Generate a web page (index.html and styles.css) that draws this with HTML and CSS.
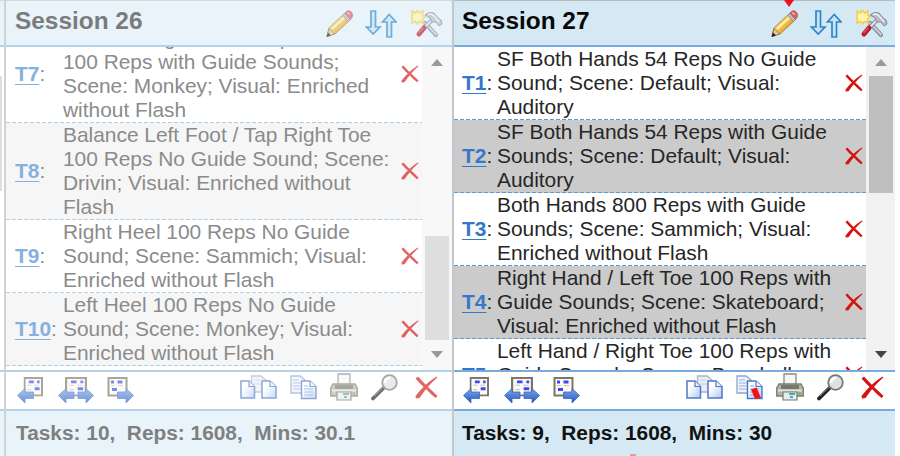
FILE: index.html
```
<!DOCTYPE html>
<html lang="en">
<head>
    <meta charset="UTF-8">
    <title>Sessions</title>
    <link rel="stylesheet" href="styles.css">
</head>
<body>
    <!-- Icons -->
    <svg class="defs">
        <defs>
            <linearGradient id="gBlue" x1="0" y1="0" x2="0" y2="1">
                <stop offset="0" stop-color="#7fa8ee"/><stop offset="1" stop-color="#2558b8"/>
            </linearGradient>
            <linearGradient id="gPage" x1="0" y1="0" x2="1" y2="1">
                <stop offset="0.3" stop-color="#ffffff"/><stop offset="1" stop-color="#b0c8f4"/>
            </linearGradient>
            <linearGradient id="gPencil" x1="0" y1="0" x2="1" y2="1">
                <stop offset="0.3" stop-color="#ffe680"/><stop offset="0.7" stop-color="#e09a20"/>
            </linearGradient>
        </defs>
        <symbol id="pencil" viewBox="0 0 27 28">
            <path d="M1 26 L3 18 L19 3 L25 9 L9 24 Z" fill="url(#gPencil)" stroke="#a98238" stroke-width="1"/>
            <path d="M6 19 L20 6" stroke="#fff3a8" stroke-width="2"/>
            <path d="M1 26.500 L3 18.500 L8.500 24 Z" fill="#e8c8a0" stroke="#80603a" stroke-width=".7"/>
            <path d="M0.500 27 L2 22.500 L5 25.500 Z" fill="#222"/>
            <path d="M16.500 5.500 L19 3 L25 9 L22.500 11.500 Z" fill="#b8bcc0" stroke="#777" stroke-width=".6"/>
            <path d="M19 3 Q21 0 24 1 Q27 3 26.500 6 Q26 8 24.500 9.500 Z" fill="#e2606a" stroke="#a84850" stroke-width=".7"/>
            <path d="M21 3 L24 4" stroke="#f8b0b0" stroke-width="1.500"/>
        </symbol>
        <symbol id="arrows" viewBox="0 0 32 28">
            <path d="M6 1 H10.500 V17 H15 L8.200 24 L1.500 17 H6 Z" fill="#c9e4f8" stroke="#2f86c8" stroke-width="1.700"/>
            <path d="M22 27 H26.500 V12 H31 L24.200 4.500 L17.500 12 H22 Z" fill="#c9e4f8" stroke="#2f86c8" stroke-width="1.700"/>
        </symbol>
        <symbol id="tools" viewBox="0 0 32 28">
            <path d="M14 13 L25 25" stroke="#858897" stroke-width="4.200" stroke-linecap="round"/>
            <path d="M14 13 L25 24.500" stroke="#c8cad8" stroke-width="2.200" stroke-linecap="round"/>
            <path d="M21 10 L12 19" stroke="#8a8d9a" stroke-width="4"/>
            <path d="M21 10 L12 19" stroke="#e0e1ea" stroke-width="2"/>
            <path d="M13 18 L8 24" stroke="#b81c2c" stroke-width="5" stroke-linecap="round"/>
            <path d="M12 18 L8 22.500" stroke="#e4505c" stroke-width="1.500" stroke-linecap="round"/>
            <path d="M14 5 Q18 1 23 3 L27 8 L30 10 L31 14 L28 16 L25 12 L21 12 L19 8 Z" fill="#b9bbc9" stroke="#858897" stroke-width="1"/>
            <path d="M17 4.500 Q21 3 24 7 L28 12" stroke="#f0f1f6" stroke-width="1.500" fill="none"/>
            <path d="M6.500 0 L8.500 3 L12 1 L11.500 5 L14 7 L11.500 9 L12 13 L8.500 11.500 L6.500 14 L4.500 11.500 L1 13 L1.500 9 L0 7 L1.500 5 L1 1 L4.500 3 Z" fill="#fff4ac" stroke="#f3ce4c" stroke-width="1.600"/>
        </symbol>
        <symbol id="sheet" viewBox="0 0 20 20" preserveAspectRatio="none">
            <rect x="1" y="1" width="18" height="18" fill="#fbfaf5" stroke="#7d7664" stroke-width="2"/>
            <path d="M5.500 5 H10.500 M14 5 H16.500 M11.500 12 H16.500" stroke="#3a48f4" stroke-width="3"/>
            <path d="M4 8.500 H8 M11 8.500 H16 M4 13 H8" stroke="#c8c4b8" stroke-width="1.200"/>
        </symbol>
        <symbol id="moveLeft" viewBox="0 0 26 27">
            <use href="#sheet" x="6.500" y="0" width="19.500" height="19.500"/>
            <path d="M0.500 18.500 L8 11.500 V15 H16.500 V21.500 H8 V26 Z" fill="url(#gBlue)" stroke="#3868c0" stroke-width=".8"/>
        </symbol>
        <symbol id="moveBoth" viewBox="0 0 36 27">
            <use href="#sheet" x="7" y="0" width="22" height="19.500"/>
            <path d="M0.500 18.500 L8 11.500 V15 H16 V21.500 H8 V26 Z" fill="url(#gBlue)" stroke="#3868c0" stroke-width=".8"/>
            <path d="M35.500 18.500 L28 11.500 V15 H20 V21.500 H28 V26 Z" fill="url(#gBlue)" stroke="#3868c0" stroke-width=".8"/>
        </symbol>
        <symbol id="moveRight" viewBox="0 0 27 27">
            <rect x="1.500" y="1" width="18" height="17.500" fill="#fbfaf5" stroke="#7d7664" stroke-width="2"/>
            <path d="M4 5 H7 M10.500 5 H15.500 M5 12.500 H10" stroke="#3a48f4" stroke-width="3"/>
            <path d="M4 8.500 H8 M11 8.500 H16" stroke="#c8c4b8" stroke-width="1.200"/>
            <path d="M26.500 18.500 L19 11.500 V15 H10.500 V21.500 H19 V26 Z" fill="url(#gBlue)" stroke="#3868c0" stroke-width=".8"/>
        </symbol>
        <symbol id="pages" viewBox="0 0 37 25">
            <path d="M11.500 1 H21 L27 6 V17 H11.500 Z" fill="#e9edf5" stroke="#a9b4c8" stroke-width="1.300"/>
            <path d="M14 5 H20 M14 9 H24" stroke="#c7cfdd" stroke-width="1.200"/>
            <path d="M1 6 H9 L14.500 11.500 V23 H1 Z" fill="url(#gPage)" stroke="#5078c4" stroke-width="1.500"/>
            <path d="M9 6 V11.500 H14.500" fill="#e8f0ff" stroke="#5078c4" stroke-width="1.200"/>
            <path d="M22 6 H30 L36 11.500 V23 H22 Z" fill="url(#gPage)" stroke="#5078c4" stroke-width="1.500"/>
            <path d="M30 6 V11.500 H36" fill="#e8f0ff" stroke="#5078c4" stroke-width="1.200"/>
        </symbol>
        <symbol id="copy" viewBox="0 0 27 25">
            <path d="M1 1 H10 L15 5 V18 H1 Z" fill="#eef3fc" stroke="#8da5cc" stroke-width="1.300"/>
            <path d="M3 5 H9 M3 8 H12 M3 11 H12 M3 14 H12" stroke="#9db2d8" stroke-width="1.200"/>
            <path d="M11.500 6 H20 L26 11.500 V23.500 H11.500 Z" fill="url(#gPage)" stroke="#4f77c4" stroke-width="1.400"/>
            <path d="M20 6 V11.500 H26" fill="#eef4ff" stroke="#4f77c4" stroke-width="1.200"/>
            <path d="M14 11 H18 M14 14 H23 M14 17 H23 M14 20 H23" stroke="#7fa0dc" stroke-width="1.200"/>
        </symbol>
        <symbol id="printer" viewBox="0 0 28 28">
            <path d="M8 12 V1 H20 V12" fill="#f5f6f4" stroke="#898c86" stroke-width="1.300"/>
            <path d="M3 11 H25 L27.300 15 V23 H0.700 V15 Z" fill="#b4b3a4" stroke="#7c7d72" stroke-width="1.300"/>
            <path d="M5 12 H23 V16 H5 Z" fill="#77786c"/>
            <path d="M2 17.500 H26" stroke="#e5e4d8" stroke-width="2"/>
            <path d="M7 19 H21 V27 H7 Z" fill="#e2eff0" stroke="#777a74" stroke-width="1.200"/>
            <path d="M13 21 H19 M14 24 H17" stroke="#5fa0ac" stroke-width="2"/>
            <rect x="22.500" y="19.500" width="2.500" height="2" fill="#50c050"/>
        </symbol>
        <symbol id="search" viewBox="0 0 27 27">
            <path d="M12 14.500 L2 24.500" stroke="#222" stroke-width="3.800" stroke-linecap="round"/>
            <path d="M12 13.500 L3 22" stroke="#858585" stroke-width="1"/>
            <circle cx="18.500" cy="8.500" r="7.300" fill="#dfe0e3" stroke="#777" stroke-width="1.800"/>
            <path d="M14 9 Q14 4 19 4" fill="none" stroke="#fff" stroke-width="2.500"/>
        </symbol>
        <symbol id="cross" viewBox="0 0 23 23">
            <path d="M0.500 2.500 L3 0.500 Q9 7 13 11 Q18 15.500 22.500 20 L20.500 22 Q15 17.500 11 13 Q5 8 0.500 2.500 Z" fill="#d41414"/>
            <path d="M21.500 0.500 L22.300 1.500 Q13 9.500 4.500 22 L1 22.500 L0.500 20 Q9 8.500 21.500 0.500 Z" fill="#d41414"/>
        </symbol>
    </svg>

    <div class="page">
        <div class="panel edge">
            <div class="head"></div>
            <div class="list"><div class="edge-thumb"></div></div>
            <div class="tools"></div>
            <div class="foot"></div>
        </div>

        <div class="panel faded">
            <div class="head">
                <span>Session 26</span>
                <div class="icons">
                    <svg class="i-pencil"><use href="#pencil"/></svg>
                    <svg class="i-arrows"><use href="#arrows"/></svg>
                    <svg class="i-tools"><use href="#tools"/></svg>
                </div>
            </div>
            <div class="list">
                <div class="rows bottom">
                    <div class="row">
                        <div class="num"><a>T7</a>:</div>
                        <div class="text">Balance Right Foot / Tap Left Toe<br>100 Reps with Guide Sounds;<br>Scene: Monkey; Visual: Enriched<br>without Flash</div>
                        <svg class="del"><use href="#cross"/></svg>
                    </div>
                    <div class="row alt">
                        <div class="num"><a>T8</a>:</div>
                        <div class="text">Balance Left Foot / Tap Right Toe<br>100 Reps No Guide Sound; Scene:<br>Drivin; Visual: Enriched without<br>Flash</div>
                        <svg class="del"><use href="#cross"/></svg>
                    </div>
                    <div class="row">
                        <div class="num"><a>T9</a>:</div>
                        <div class="text">Right Heel 100 Reps No Guide<br>Sound; Scene: Sammich; Visual:<br>Enriched without Flash</div>
                        <svg class="del"><use href="#cross"/></svg>
                    </div>
                    <div class="row alt">
                        <div class="num"><a>T10</a>:</div>
                        <div class="text">Left Heel 100 Reps No Guide<br>Sound; Scene: Monkey; Visual:<br>Enriched without Flash</div>
                        <svg class="del"><use href="#cross"/></svg>
                    </div>
                </div>
                <div class="scroll">
                    <div class="up"></div>
                    <div class="track low"><div class="thumb"></div></div>
                    <div class="down"></div>
                </div>
            </div>
            <div class="tools">
                <svg class="i-left"><use href="#moveLeft"/></svg>
                <svg class="i-both"><use href="#moveBoth"/></svg>
                <svg class="i-right"><use href="#moveRight"/></svg>
                <svg class="i-pages"><use href="#pages"/></svg>
                <svg class="i-copy"><use href="#copy"/></svg>
                <svg class="i-printer"><use href="#printer"/></svg>
                <svg class="i-search"><use href="#search"/></svg>
                <svg class="i-cross"><use href="#cross"/></svg>
            </div>
            <div class="foot">Tasks: 10,&nbsp; Reps: 1608,&nbsp; Mins: 30.1</div>
        </div>

        <div class="panel current">
            <div class="head">
                <span>Session 27</span>
                <div class="icons">
                    <svg class="i-pencil"><use href="#pencil"/></svg>
                    <svg class="i-arrows"><use href="#arrows"/></svg>
                    <svg class="i-tools"><use href="#tools"/></svg>
                </div>
                <div class="marker"></div>
            </div>
            <div class="list">
                <div class="rows">
                    <div class="row">
                        <div class="num"><a>T1</a>:</div>
                        <div class="text">SF Both Hands 54 Reps No Guide<br>Sound; Scene: Default; Visual:<br>Auditory</div>
                        <svg class="del"><use href="#cross"/></svg>
                    </div>
                    <div class="row alt">
                        <div class="num"><a>T2</a>:</div>
                        <div class="text">SF Both Hands 54 Reps with Guide<br>Sounds; Scene: Default; Visual:<br>Auditory</div>
                        <svg class="del"><use href="#cross"/></svg>
                    </div>
                    <div class="row">
                        <div class="num"><a>T3</a>:</div>
                        <div class="text">Both Hands 800 Reps with Guide<br>Sounds; Scene: Sammich; Visual:<br>Enriched without Flash</div>
                        <svg class="del"><use href="#cross"/></svg>
                    </div>
                    <div class="row alt">
                        <div class="num"><a>T4</a>:</div>
                        <div class="text">Right Hand / Left Toe 100 Reps with<br>Guide Sounds; Scene: Skateboard;<br>Visual: Enriched without Flash</div>
                        <svg class="del"><use href="#cross"/></svg>
                    </div>
                    <div class="row">
                        <div class="num"><a>T5</a>:</div>
                        <div class="text">Left Hand / Right Toe 100 Reps with<br>Guide Sounds; Scene: Baseball;<br>Visual: Enriched without Flash</div>
                        <svg class="del"><use href="#cross"/></svg>
                    </div>
                </div>
                <div class="scroll">
                    <div class="up"></div>
                    <div class="track"><div class="thumb"></div></div>
                    <div class="down"></div>
                </div>
            </div>
            <div class="tools">
                <svg class="i-left"><use href="#moveLeft"/></svg>
                <svg class="i-both"><use href="#moveBoth"/></svg>
                <svg class="i-right"><use href="#moveRight"/></svg>
                <svg class="i-pages"><use href="#pages"/></svg>
                <svg class="i-copy" viewBox="0 0 27 25"><use href="#copy"/><path d="M15 14.500 L20.500 12.500 L25 23 L19 24 Z" fill="#f01418"/></svg>
                <svg class="i-printer"><use href="#printer"/></svg>
                <svg class="i-search"><use href="#search"/></svg>
                <svg class="i-cross"><use href="#cross"/></svg>
            </div>
            <div class="foot">Tasks: 9,&nbsp; Reps: 1608,&nbsp; Mins: 30<div class="dot"></div></div>
        </div>
    </div>
</body>
</html>
```
FILE: styles.css
```
* {
    box-sizing: border-box;
}

body {
    margin: 0;
    width: 900px;
    height: 456px;
    overflow: hidden;
    background: white;
    font-family: "Liberation Sans", Arial, sans-serif;
    color: #262626;
}

svg {
    display: block;
    flex: none;
}

.defs {
    position: absolute;
    width: 0;
    height: 0;
}

.page {
    display: flex;
    height: 456px;
}

.panel {
    display: flex;
    flex-direction: column;
    height: 456px;
}

.edge {
    width: 4px;
}

.faded {
    width: 448px;
    border-left: 2px solid #d2d2d2;
}

.current {
    width: 443px;
    border-left: 2px solid #c4c8cb;
}

/* Header */
.head {
    position: relative;
    display: flex;
    justify-content: space-between;
    align-items: flex-start;
    height: 47px;
    padding: 9px 7px 0 8px;
    border-top: 1px solid #b9bdc0;
    border-bottom: 2px solid #78acdd;
    background: #d4e9f4;
    color: #080808;
    font-size: 24.4px;
    font-weight: bold;
    line-height: 22px;
}

.icons {
    display: flex;
}

.i-pencil {
    width: 27px;
    height: 28px;
    margin-right: 12px;
}

.i-arrows {
    width: 32px;
    height: 28px;
    margin-right: 14px;
}

.i-tools {
    width: 32px;
    height: 28px;
}

.marker {
    position: absolute;
    top: -1px;
    left: 330px;
    border-left: 5px solid transparent;
    border-right: 5px solid transparent;
    border-top: 7px solid #e8151b;
}

/* Task list */
.list {
    display: flex;
    height: 323px;
    overflow: hidden;
}

.rows {
    display: flex;
    flex-direction: column;
    flex: 1;
    height: 323px;
}

.rows.bottom {
    justify-content: flex-end;
    padding-bottom: 4px;
}

.row {
    display: flex;
    align-items: center;
    flex: none;
    padding: 0 0 1px 8px;
    background: repeating-linear-gradient(90deg, #5b9bd5 0 4px, transparent 4px 6px) left bottom / 100% 1px no-repeat;
    font-size: 20.9px;
    line-height: 24px;
    white-space: nowrap;
}

.alt {
    background-color: #cbcbcb;
}

.num {
    width: 35px;
}

.num a {
    color: #3478ca;
    font-weight: bold;
    text-decoration: underline;
    text-decoration-thickness: 1px;
    text-underline-offset: 3px;
}

.text {
    flex: 1;
}

.del {
    width: 18px;
    height: 18px;
    margin-right: 3px;
}

/* Scrollbar */
.scroll {
    display: flex;
    flex-direction: column;
    justify-content: space-between;
    align-items: center;
    width: 29px;
    height: 323px;
    padding: 12px 0;
    background: #f1f1f1;
}

.up, .down {
    border-left: 6px solid transparent;
    border-right: 6px solid transparent;
}

.up {
    border-bottom: 7px solid #9a9a9a;
}

.down {
    border-top: 7px solid #444;
}

.track {
    width: 24px;
    height: 266px;
}

.thumb {
    height: 117px;
    background: #bfbfbf;
}

.low {
    display: flex;
    align-items: flex-end;
    padding-bottom: 2px;
}

.low .thumb {
    width: 24px;
    height: 104px;
    background: #dedede;
}

/* Toolbar */
.tools {
    display: flex;
    height: 41px;
    padding: 5px 11px 0 9px;
    border-top: 2px solid #78acdd;
    border-bottom: 2px solid #78acdd;
    background: white;
}

.i-left {
    width: 26px;
    height: 27px;
    margin-right: 15px;
}

.i-both {
    width: 36px;
    height: 27px;
    margin-right: 13px;
}

.i-right {
    width: 27px;
    height: 27px;
}

.i-pages {
    width: 37px;
    height: 25px;
    margin-left: auto;
    margin-right: 13px;
    margin-top: -2px;
}

.i-copy {
    width: 27px;
    height: 25px;
    margin-right: 13px;
    margin-top: -2px;
}

.i-printer {
    width: 28px;
    height: 28px;
    margin-right: 13px;
    margin-top: -4px;
}

.i-search {
    width: 27px;
    height: 27px;
    margin-right: 17px;
    margin-top: -3px;
}

.i-cross {
    width: 23px;
    height: 23px;
    margin-top: -1px;
}

/* Totals */
.foot {
    position: relative;
    height: 45px;
    padding: 10px 0 0 8px;
    background: #d4e9f4;
    color: #111;
    font-size: 20.85px;
    font-weight: bold;
    line-height: 24px;
    white-space: nowrap;
}

.dot {
    position: absolute;
    left: 176px;
    bottom: 0;
    width: 6px;
    height: 2px;
    background: #e59a9a;
}

/* Previous session, dimmed */
.edge .head, .faded .head {
    padding-left: 9px;
    padding-right: 9px;
    border-top-color: #d6dadd;
    border-bottom-color: #b3d2ec;
    background: #e8f4fa;
    color: #7b7b7b;
}

.edge .foot, .faded .foot {
    padding-left: 10px;
    background: #e8f4fa;
    color: #7f7f7f;
}

.edge .tools, .faded .tools {
    padding-left: 11px;
    padding-right: 14px;
    border-color: #b3d2ec;
}

.edge .head, .edge .tools, .edge .foot {
    padding: 0;
}

.edge-thumb {
    width: 2px;
    height: 115px;
    margin-top: 29px;
    background: #dedede;
}

.faded .row {
    padding-left: 9px;
    background-image: repeating-linear-gradient(90deg, #a9cfeb 0 4px, transparent 4px 6px);
    color: #8b8b8b;
}

.faded .alt {
    background-color: #f6f6f6;
}

.faded .num {
    width: 48px;
}

.faded .num a {
    color: #86b0e0;
}

.faded .scroll {
    width: 30px;
    background: #f8f8f8;
}

.faded .down {
    border-top-color: #999;
}

.faded svg {
    opacity: 0.65;
}
```
